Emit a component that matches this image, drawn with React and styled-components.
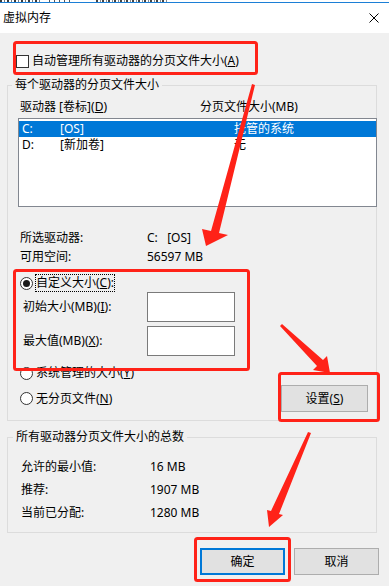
import React from 'react';
import styled, { createGlobalStyle } from 'styled-components';

const GlobalStyle = createGlobalStyle`
  html, body {
    margin: 0;
    padding: 0;
    background: #f0f0f0;
  }
  body {
    font-family: "Noto Sans", "Noto Sans CJK SC", sans-serif;
    font-size: 12px;
    color: #000;
  }
`;

const Dialog = styled.div`
  position: relative;
  width: 389px;
  height: 586px;
  overflow: hidden;
  background: #f0f0f0;
  font-family: "Noto Sans", "Noto Sans CJK SC", sans-serif;
  font-size: 12px;
  line-height: 16px;
  color: #000;
`;

// sliver of the window behind, cut off at the top edge
const TopStrip = styled.div`
  height: 2px;
  background:
    repeating-linear-gradient(90deg, #3a3a3a 0 2px, #fff 2px 4px, #777 4px 5px, #fff 5px 7px) 0 0 / 40px 2px no-repeat,
    repeating-linear-gradient(90deg, #fff 0 1px, #555 1px 2px, #fff 2px 5px) 48px 0 / 22px 2px no-repeat,
    repeating-linear-gradient(90deg, #444 0 2px, #fff 2px 4px, #888 4px 5px, #fff 5px 6px) 96px 0 / 72px 2px no-repeat,
    #fff;
  border-bottom: 1px solid #1c7fd6;
`;

const TitleBar = styled.div`
  height: 30px;
  background: #fff;
  display: flex;
  align-items: center;
  justify-content: space-between;
  padding: 0 10px 0 3px;
`;

const Body = styled.div`
  padding-top: 20px;
`;

const CheckRow = styled.div`
  display: flex;
  align-items: center;
  gap: 3px;
  height: 16px;
  padding-left: 16px;
`;

const CheckBox = styled.span`
  width: 13px;
  height: 13px;
  box-sizing: border-box;
  border: 1px solid #333;
  background: #fff;
`;

const U = styled.span`
  text-decoration: underline;
  text-underline-offset: 1px;
`;

const Group = styled.div`
  position: relative;
  box-sizing: border-box;
  width: 370px;
  height: ${p => p.$h}px;
  margin: ${p => p.$top}px 0 0 7px;
  border: 1px solid #dcdcdc;
  padding-left: 10px;
`;

const Legend = styled.span`
  position: absolute;
  top: -9px;
  left: ${p => p.$left}px;
  padding: 0 3px;
  background: #f0f0f0;
`;

const HeaderRow = styled.div`
  display: grid;
  grid-template-columns: 180px 1fr;
  margin-top: 13px;
  padding-left: 2px;
`;

const ListBox = styled.div`
  box-sizing: border-box;
  width: 359px;
  height: 89px;
  margin-top: 3px;
  padding-top: 2px;
  border: 1px solid #828790;
  background: #fff;
`;

const DriveRow = styled.div`
  display: grid;
  grid-template-columns: 38px 174px 1fr;
  height: 16px;
  padding-left: 3px;
  background: ${p => (p.$selected ? '#0078d7' : 'transparent')};
  color: ${p => (p.$selected ? '#fff' : '#000')};
`;

const InfoGrid = styled.div`
  display: grid;
  grid-template-columns: ${p => p.$label}px 1fr;
  row-gap: ${p => p.$gap}px;
  margin-top: ${p => p.$top}px;
  padding-left: ${p => p.$indent}px;
`;

const RadioRow = styled.div`
  display: flex;
  align-items: center;
  gap: 2px;
  height: 18px;
  margin-top: ${p => p.$top || 0}px;
  padding-left: 2px;
`;

const RadioDot = styled.span`
  position: relative;
  box-sizing: border-box;
  width: 13px;
  height: 13px;
  border-radius: 50%;
  border: 1px solid #333;
  background: #fff;

  &::after {
    content: '';
    display: ${p => (p.$checked ? 'block' : 'none')};
    position: absolute;
    left: 2px;
    top: 2px;
    width: 7px;
    height: 7px;
    border-radius: 50%;
    background: #1a1a1a;
  }
`;

const RadioLabel = styled.span`
  padding: 0;
  border: 1px ${p => (p.$focus ? 'dotted #000' : 'solid transparent')};
`;

const FieldGrid = styled.div`
  display: grid;
  grid-template-columns: 124px 88px;
  row-gap: 4px;
  align-items: center;
  padding-left: 5px;
`;

const TextField = styled.div`
  box-sizing: border-box;
  height: 30px;
  border: 1px solid #7a7a7a;
  background: #fff;
`;

const BottomRow = styled.div`
  display: flex;
  align-items: center;
  justify-content: space-between;
  margin-top: 3px;
  padding-right: 8px;
`;

const Button = styled.div`
  box-sizing: border-box;
  width: ${p => p.$w}px;
  height: 27px;
  display: flex;
  align-items: center;
  justify-content: center;
  background: #e1e1e1;
  border: ${p => (p.$default ? '2px solid #0078d7' : '1px solid #adadad')};
`;

const ButtonRow = styled.div`
  display: flex;
  justify-content: flex-end;
  gap: 9px;
  margin-top: 15px;
  padding-right: 10px;
`;

const Overlay = styled.svg`
  position: absolute;
  left: 0;
  top: 0;
  pointer-events: none;
`;

const RED = '#ff2218';

const marks = [
  { x: 14.5, y: 42.5, w: 242, h: 31 },
  { x: 14.5, y: 270.5, w: 234, h: 99 },
  { x: 279.5, y: 373.5, w: 99, h: 47 },
  { x: 195.5, y: 538.5, w: 94, h: 42 },
];

const arrows = [
  '252,84 255,85 219,233 228,235 206,246 202,229 211,231',
  '280,326 282,324 323,360 327,356 330,373 313,370 317,366',
  '308,432 311,433 279,514 283,515 269,527 267,510 271,511',
];

function Annotations() {
  return (
    <Overlay width="389" height="586" viewBox="0 0 389 586">
      {marks.map((m, i) => (
        <rect key={i} x={m.x} y={m.y} width={m.w} height={m.h} rx="2" fill="none" stroke={RED} strokeWidth="3" />
      ))}
      {arrows.map((pts, i) => (
        <polygon key={i} points={pts} fill={RED} />
      ))}
    </Overlay>
  );
}

function Radio({ checked, focus, children, top }) {
  return (
    <RadioRow $top={top}>
      <RadioDot $checked={checked} />
      <RadioLabel $focus={focus}>{children}</RadioLabel>
    </RadioRow>
  );
}

export default function App() {
  return (
    <Dialog>
      <GlobalStyle />
      <TopStrip />
      <TitleBar>
        <span>虚拟内存</span>
        <svg width="10" height="10" viewBox="0 0 10 10">
          <path d="M0.5 0.5 L9.5 9.5 M9.5 0.5 L0.5 9.5" stroke="#000" strokeWidth="1" />
        </svg>
      </TitleBar>

      <Body>
        <CheckRow>
          <CheckBox />
          <span>自动管理所有驱动器的分页文件大小(<U>A</U>)</span>
        </CheckRow>

        <Group $top={16} $h={336}>
          <Legend $left={4}>每个驱动器的分页文件大小</Legend>
          <HeaderRow>
            <span>驱动器 [卷标](<U>D</U>)</span>
            <span>分页文件大小(MB)</span>
          </HeaderRow>
          <ListBox>
            <DriveRow $selected>
              <span>C:</span>
              <span>[OS]</span>
              <span>托管的系统</span>
            </DriveRow>
            <DriveRow>
              <span>D:</span>
              <span>[新加卷]</span>
              <span>无</span>
            </DriveRow>
          </ListBox>

          <InfoGrid $label={127} $gap={3} $top={23} $indent={2}>
            <span>所选驱动器:</span>
            <span>C:&nbsp;&nbsp;&nbsp;[OS]</span>
            <span>可用空间:</span>
            <span>56597 MB</span>
          </InfoGrid>

          <Radio checked focus top={9}>
            自定义大小(<U>C</U>):
          </Radio>
          <FieldGrid>
            <span>初始大小(MB)(<U>I</U>):</span>
            <TextField />
            <span>最大值(MB)(<U>X</U>):</span>
            <TextField />
          </FieldGrid>

          <Radio top={8}>
            系统管理的大小(<U>Y</U>)
          </Radio>
          <BottomRow>
            <Radio>
              无分页文件(<U>N</U>)
            </Radio>
            <Button $w={87}>
              设置(<U>S</U>)
            </Button>
          </BottomRow>
        </Group>

        <Group $top={16} $h={96}>
          <Legend $left={5}>所有驱动器分页文件大小的总数</Legend>
          <InfoGrid $label={129} $gap={7} $top={21} $indent={3}>
            <span>允许的最小值:</span>
            <span>16 MB</span>
            <span>推荐:</span>
            <span>1907 MB</span>
            <span>当前已分配:</span>
            <span>1280 MB</span>
          </InfoGrid>
        </Group>

        <ButtonRow>
          <Button $w={85} $default>
            确定
          </Button>
          <Button $w={85}>取消</Button>
        </ButtonRow>
      </Body>

      <Annotations />
    </Dialog>
  );
}
